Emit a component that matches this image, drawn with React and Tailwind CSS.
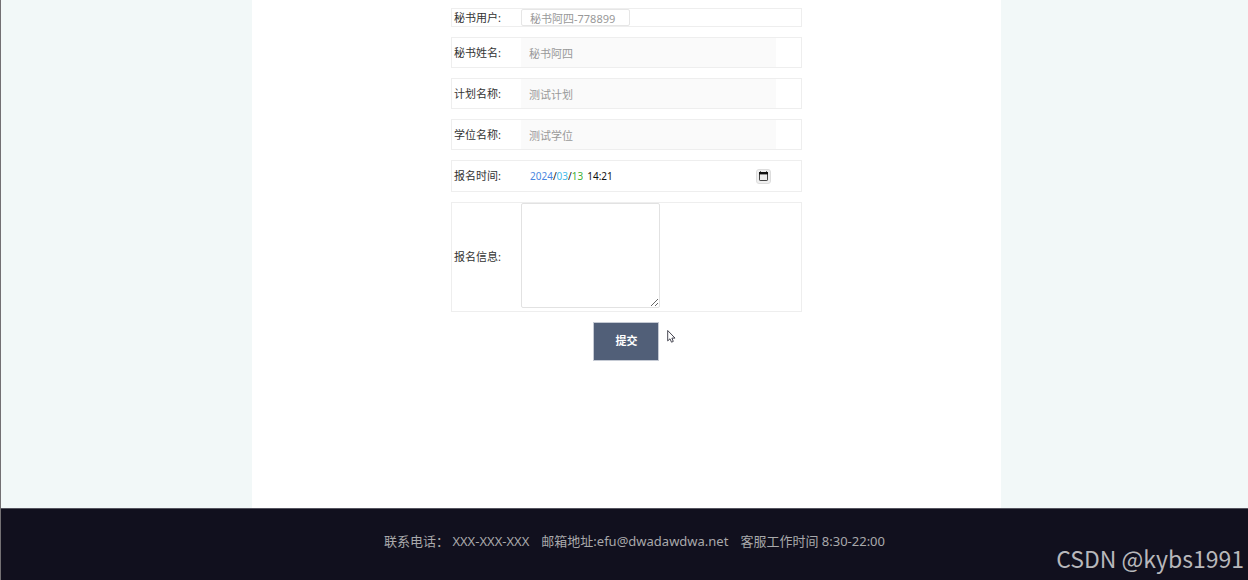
import React from "react";

const sans = "font-['Noto_Sans','Noto_Sans_CJK_SC',sans-serif]";

function Row({ label, id, children }) {
  return (
    <div className="flex items-center border border-[#eeeeee]">
      <label htmlFor={id} className="w-[69px] shrink-0 pl-[2px] text-[11px] leading-4 text-[#333333]">
        {label}
      </label>
      {children}
    </div>
  );
}

function ReadonlyField({ id, label, value }) {
  return (
    <Row id={id} label={label}>
      <input
        id={id}
        readOnly
        defaultValue={value}
        className="h-[29px] w-[255px] bg-[#fafafa] px-2 text-[11px] text-[#999999] outline-none"
      />
    </Row>
  );
}

function CalendarIcon() {
  return (
    <svg viewBox="0 0 11 11" className="size-[11px] shrink-0" fill="none" aria-hidden="true">
      <rect x="1.5" y="1.5" width="8" height="8" rx="0.6" stroke="#444" />
      <path d="M1 1H10V3.4H1Z" fill="#111" />
      <path d="M2.5 .4V2M8.5 .4V2" stroke="#111" />
    </svg>
  );
}

function DateField() {
  const part = "field-sizing-content bg-transparent p-0 outline-none";
  return (
    <div className="flex h-[30px] w-[255px] items-center pr-[5px] pl-[9px] text-[10px] text-[#111111]">
      <div role="group" aria-label="报名时间" className="flex grow items-center">
        <input id="year" aria-label="年" defaultValue="2024" className={`${part} text-[#4a86e0]`} />
        <span>/</span>
        <input aria-label="月" defaultValue="03" className={`${part} text-[#45bdec]`} />
        <span>/</span>
        <input aria-label="日" defaultValue="13" className={`${part} text-[#43b035]`} />
        <input aria-label="时间" defaultValue="14:21" className={`${part} ml-1`} />
      </div>
      <button
        type="button"
        aria-label="选择日期"
        className="flex size-[15px] items-center justify-center rounded-[3px] border border-[#dddddd] bg-[#efefef]"
      >
        <CalendarIcon />
      </button>
    </div>
  );
}

function Pointer() {
  return (
    <svg viewBox="0 0 9 14" className="absolute top-2 left-full ml-2 h-[14px] w-[9px]" aria-hidden="true">
      <path d="M.7 .5V10.9L3 8.8L4.5 12.2L6.3 11.4L4.9 8.1H8L.7 .5Z" fill="#fff" stroke="#333340" strokeWidth=".9" />
    </svg>
  );
}

export default function App() {
  return (
    <div className={`flex min-h-screen flex-col border-l border-[#737073] bg-[#f2f8f8] ${sans}`}>
      <main className="flex grow justify-center pl-1">
        <form className="flex w-[60vw] flex-col items-center bg-white pt-2" onSubmit={(e) => e.preventDefault()}>
          <div className="flex w-[351px] max-w-full flex-col gap-[10px]">
            <Row id="user" label="秘书用户:">
              <input
                id="user"
                readOnly
                defaultValue="秘书阿四-778899"
                className="h-[17px] w-[109px] rounded-[2px] border border-[#e6e6e6] px-2 text-[11px] text-[#999999] outline-none"
              />
            </Row>
            <ReadonlyField id="name" label="秘书姓名:" value="秘书阿四" />
            <ReadonlyField id="plan" label="计划名称:" value="测试计划" />
            <ReadonlyField id="degree" label="学位名称:" value="测试学位" />
            <Row id="year" label="报名时间:">
              <DateField />
            </Row>
            <Row id="info" label="报名信息:">
              <textarea
                id="info"
                className="mb-[3px] block h-[105px] w-[139px] resize rounded-[2px] border border-[#e2e2e2] bg-white p-2 text-[11px] outline-none"
              />
            </Row>
            <div className="relative self-center">
              <button
                type="submit"
                className="block h-[39px] w-[66px] border border-[#c5cad4] bg-[#515f78] text-[11px] font-bold text-white"
              >
                提交
              </button>
              <Pointer />
            </div>
          </div>
        </form>
      </main>
      <footer className="relative h-[72px] border-t border-[#55545f] bg-[#11101e] pt-[22px] pl-5 text-[13px] leading-5 text-[#a9a9ab]">
        <p className="flex justify-center gap-3">
          <span>联系电话： XXX-XXX-XXX</span>
          <span>邮箱地址:efu@dwadawdwa.net</span>
          <span>客服工作时间 8:30-22:00</span>
        </p>
        <span className="absolute right-1 bottom-[6px] font-['Noto_Sans_CJK_SC',sans-serif] text-[23px] leading-8 text-[#b8b8bb]">
          CSDN @kybs1991
        </span>
      </footer>
    </div>
  );
}
